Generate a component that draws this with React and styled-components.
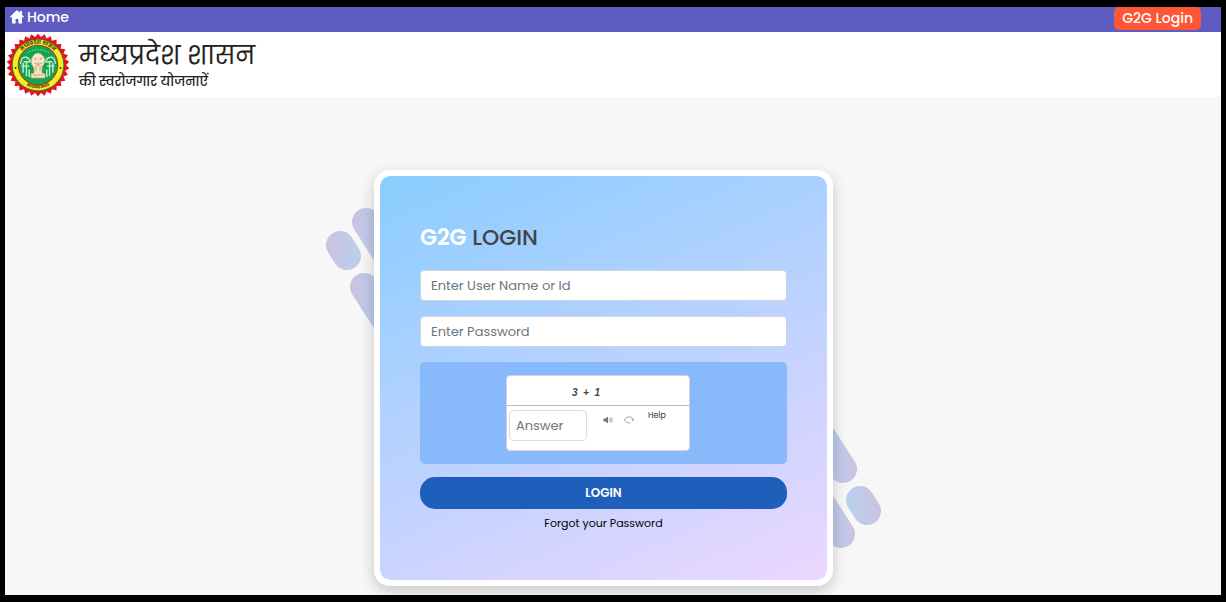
import styled, { createGlobalStyle } from "styled-components";

export default function App() {
    return (
        <>
            <GlobalStyle />
            <Page>
                <TopBar>
                    <HomeLink href="#home">
                        <HomeIcon />
                        Home
                    </HomeLink>
                    <G2GButton type="button">G2G Login</G2GButton>
                </TopBar>
                <Header>
                    <Emblem />
                    <div>
                        <SiteName>मध्यप्रदेश शासन</SiteName>
                        <SiteTagline>की स्वरोजगार योजनाऐं</SiteTagline>
                    </div>
                </Header>
                <Main>
                    <LoginCard />
                </Main>
            </Page>
        </>
    );
}

function LoginCard() {
    return (
        <CardWrap>
            <Pills />
            <Card onSubmit={(e) => e.preventDefault()}>
                <Title>
                    <span>G2G</span> LOGIN
                </Title>
                <Field type="text" placeholder="Enter User Name or Id" aria-label="User name or id" />
                <Field type="password" placeholder="Enter Password" aria-label="Password" />
                <CaptchaArea>
                    <CaptchaBox>
                        <Sum>3&nbsp; + &nbsp;1</Sum>
                        <CaptchaRow>
                            <AnswerInput type="text" placeholder="Answer" aria-label="Answer" />
                            <IconButton type="button" aria-label="Listen">
                                <SoundIcon />
                            </IconButton>
                            <IconButton type="button" aria-label="Refresh">
                                <RefreshIcon />
                            </IconButton>
                            <HelpLink href="#help">Help</HelpLink>
                        </CaptchaRow>
                    </CaptchaBox>
                </CaptchaArea>
                <LoginButton type="submit">LOGIN</LoginButton>
                <ForgotLink href="#forgot">Forgot your Password</ForgotLink>
            </Card>
        </CardWrap>
    );
}

function HomeIcon() {
    return (
        <svg width="14" height="14" viewBox="0 0 14 14" fill="#fff" aria-hidden="true">
            <path d="M7 0 0 6.800l1 1 1-.8v6.500h3.600V9h2.800v4.500H12V7l1 .8 1-1-2-2V1h-2.200v1.700z" />
        </svg>
    );
}

function SoundIcon() {
    return (
        <svg width="10" height="10" viewBox="0 0 10 10" fill="none" stroke="#999" aria-hidden="true">
            <path d="M.5 3.500h1.800L5 1.500v7L2.300 6.500H.5z" fill="#777" stroke="none" />
            <path d="M6 3.400q1.200 1.600 0 3.200M7.300 2.600q1.700 2.400 0 4.800M8.500 2.200q1.800 2.800 0 5.600" strokeWidth="0.7" />
        </svg>
    );
}

function RefreshIcon() {
    return (
        <svg width="10" height="10" viewBox="0 0 10 10" fill="none" stroke="#888" aria-hidden="true">
            <path d="M6.500 7.800C3.500 8.600.8 7 .8 5S2.600 2 5 2s4 1.200 4 3" strokeWidth="0.8" />
            <path d="M7.600 4.700 9 6 9.900 4.400" strokeWidth="0.7" />
        </svg>
    );
}

const teeth = Array.from({ length: 30 }, (_, i) => i * 12);

function Emblem() {
    return (
        <svg width="64" height="64" viewBox="-32 -32 64 64" role="img" aria-label="Emblem">
            <defs>
                <path id="ringTop" d="M-21.200 0A21.200 21.200 0 0 1 21.200 0" />
                <path id="ringBottom" d="M-23.500 0A23.500 23.500 0 0 0 23.500 0" />
            </defs>
            {teeth.map((a) => (
                <path key={a} d="M-3.500 -27 0 -31.500 3.500 -27z" fill="#e3131b" transform={`rotate(${a})`} />
            ))}
            <circle r="27.500" fill="#e3131b" />
            <circle r="26" fill="#1c9c48" />
            <circle r="25.300" fill="#f7ec1e" />
            <RingText textAnchor="middle">
                <textPath href="#ringTop" startOffset="50%">मध्यप्रदेश शासन</textPath>
            </RingText>
            <RingText textAnchor="middle" $small>
                <textPath href="#ringBottom" startOffset="50%">सत्यमेव जयते</textPath>
            </RingText>
            <circle cx="-22.500" cy="3" r="1" fill="#3c3a10" />
            <circle cx="22.500" cy="3" r="1" fill="#3c3a10" />
            <circle r="20.300" fill="#e3131b" />
            <circle r="19.500" fill="#10a550" />
            <g stroke="#c5ecd0" strokeWidth="1.300" fill="none" transform="scale(1.1)">
                <path d="M-13.500 7V-2M-10.500 10V-3M-8 11V4M13.500 7V-2M10.500 10V-3M8 11V4" />
                <path d="M-16-1q1-7 5-6t4 5M16-1q-1-7-5-6t-4 5M-15 1h7M15 1H8M-13-3h5M13-3H8" />
                <path d="M-10-11q5-3 10-3t10 3" strokeDasharray="1.500 1" strokeWidth="0.600" />
            </g>
            <path
                d="M-5-9q2-3 5-3t5 3l2 3-1 5-2 3v6l3 1v4H-7V9l3-1V3l-2-3-1-5z"
                fill="#f4e6c8"
                stroke="#cf9f63"
                strokeWidth="0.800"
            />
            <path
                d="M-4-6q2-2 2 1M4-6q-2-2-2 1M-4-2q4 3 8 0M-2 0v6M2 0v6M0-3v4M-5 10H5"
                stroke="#b8935f"
                strokeWidth="0.800"
                fill="none"
            />
        </svg>
    );
}

function Pills() {
    return (
        <PillsSvg width="560" height="348" viewBox="0 0 560 348" fill="none" aria-hidden="true">
            <defs>
                <PillGradient id="outerLeft" from={2} to={37} />
                <PillGradient id="innerLeft" from={26} to={58} />
                <PillGradient id="outerRight" from={558} to={523} />
                <PillGradient id="innerRight" from={534} to={502} />
            </defs>
            <g strokeWidth="28" strokeLinecap="round">
                <path d="M16 41l7 11" stroke="url(#outerLeft)" />
                <path d="M42 18l40 62M40 83l40 62" stroke="url(#innerLeft)" />
                <path d="M543 307l-7-11" stroke="url(#outerRight)" />
                <path d="M519 265l-40-62M517 330l-40-62" stroke="url(#innerRight)" />
            </g>
        </PillsSvg>
    );
}

function PillGradient({ id, from, to }) {
    return (
        <linearGradient id={id} gradientUnits="userSpaceOnUse" x1={from} x2={to} y1="0" y2="0">
            <stop offset="0" stopColor="#c9c2e1" />
            <stop offset="1" stopColor="#b9d0ed" />
        </linearGradient>
    );
}

const GlobalStyle = createGlobalStyle`
* {
    box-sizing: border-box;
}
body {
    margin: 0;
    background: #000;
    font-family: "Poppins", "Inter", "Noto Sans", sans-serif;
}
`;

const Page = styled.div`
display: flex;
flex-direction: column;
min-height: 100vh;
border: solid #000;
border-width: 7px 5px;
background: #f7f7f7;
`;

const TopBar = styled.nav`
display: flex;
justify-content: space-between;
align-items: flex-start;
height: 25px;
padding: 0 20px 0 5px;
background: #5e5bc3;
`;

const HomeLink = styled.a`
display: flex;
align-items: center;
gap: 3px;
height: 20px;
color: #fff;
font-size: 14px;
font-weight: 500;
text-decoration: none;
`;

const G2GButton = styled.button`
height: 23px;
padding: 0 8px;
border: 0;
border-radius: 5px;
background: #ff5637;
color: #fff;
font-family: inherit;
font-size: 14px;
font-weight: 500;
`;

const Header = styled.header`
display: flex;
align-items: center;
gap: 9px;
height: 65px;
padding-left: 1px;
background: #fff;
color: #222;
white-space: nowrap;
`;

const RingText = styled.text`
fill: #3c3a10;
font-size: ${(props) => (props.$small ? "4px" : "5px")};
font-weight: 700;
`;

const SiteName = styled.div`
font-size: 25px;
font-weight: 400;
line-height: 34px;
`;

const SiteTagline = styled.div`
font-size: 13px;
font-weight: 500;
line-height: 18px;
`;

const Main = styled.main`
display: flex;
flex: 1;
justify-content: center;
align-items: flex-start;
padding: 73px 19px 9px 0;
overflow: hidden;
`;

const CardWrap = styled.div`
position: relative;
width: 459px;
max-width: 100%;
`;

const PillsSvg = styled.svg`
position: absolute;
top: 50%;
left: 50%;
transform: translate(-50%, -50%);
`;

const Card = styled.form`
position: relative;
display: flex;
flex-direction: column;
padding: 47px 40px 48px;
border: 6px solid #fff;
border-radius: 16px;
background: linear-gradient(156deg, #89cdff, #ecd7ff) padding-box;
box-shadow: 0 5px 15px rgba(0, 0, 0, 0.2);
`;

const Title = styled.h1`
margin: 0 0 17px;
color: #444;
font-size: 22px;
font-weight: 500;
line-height: 30px;

span {
    color: #fff;
    font-weight: 600;
}
`;

const Field = styled.input`
width: 100%;
height: 31px;
margin-bottom: 15px;
padding: 0 10px;
border: 1px solid #ced4da;
border-radius: 4px;
background: #fff;
font-family: inherit;
font-size: 13px;

&::placeholder {
    color: #6c757d;
    opacity: 1;
}
`;

const CaptchaArea = styled.div`
display: flex;
justify-content: center;
margin-bottom: 13px;
padding: 13px 11px 13px 0;
border-radius: 5px;
background: #88bafb;
`;

const CaptchaBox = styled.div`
width: 184px;
height: 76px;
border: 1px solid #ced4da;
border-radius: 4px;
background: #fff;
`;

const Sum = styled.div`
height: 30px;
padding-right: 24px;
border-bottom: 1px solid #bbb;
color: #444;
font-family: "Liberation Sans", sans-serif;
font-size: 10px;
font-style: italic;
font-weight: 700;
line-height: 34px;
text-align: center;
`;

const CaptchaRow = styled.div`
display: flex;
align-items: flex-start;
padding: 4px 2px;
`;

const AnswerInput = styled(Field)`
width: 78px;
margin: 0 16px 0 0;
padding: 0 6px;
border-color: #ddd;
`;

const IconButton = styled.button`
display: flex;
margin-right: 11px;
padding: 5px 0;
border: 0;
background: none;
`;

const HelpLink = styled.a`
margin-left: 3px;
color: #333;
font-size: 8px;
line-height: 12px;
text-decoration: none;
`;

const LoginButton = styled.button`
height: 32px;
border: 0;
border-radius: 15px;
background: #1f5fbc;
color: #fff;
font-family: inherit;
font-size: 12px;
font-weight: 600;
`;

const ForgotLink = styled.a`
align-self: center;
margin-top: 6px;
color: #000;
font-size: 11px;
line-height: 17px;
text-decoration: none;
`;
